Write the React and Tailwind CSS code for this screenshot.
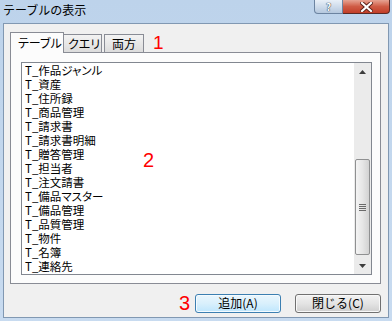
import React from 'react';

const tables = [
  'T_作品ジャンル',
  'T_資産',
  'T_住所録',
  'T_商品管理',
  'T_請求書',
  'T_請求書明細',
  'T_贈答管理',
  'T_担当者',
  'T_注文請書',
  'T_備品マスター',
  'T_備品管理',
  'T_品質管理',
  'T_物件',
  'T_名簿',
  'T_連絡先',
];

const Arrow = ({ down }) => (
  <svg width="7" height="4" viewBox="0 0 7 4">
    <path d={down ? 'M0 0 L7 0 L3.5 4 Z' : 'M0 4 L3.5 0 L7 4 Z'} fill="#3c3c3c" />
  </svg>
);

const ScrollBar = () => (
  <div className="w-[17px] bg-[#ebebeb] flex flex-col">
    <div className="h-[17px] flex items-center justify-center">
      <Arrow />
    </div>
    <div className="h-[79px]" />
    <div className="h-[96px] mx-[1px] rounded-[2px] border border-[#8f9091] bg-gradient-to-r from-[#f4f4f4] via-[#e6e6e6] to-[#d2d2d2] flex flex-col items-center justify-center gap-[1px]">
      <div className="w-[7px] h-[1px] bg-[#6a6a6a]" />
      <div className="w-[7px] h-[1px] bg-[#6a6a6a]" />
      <div className="w-[7px] h-[1px] bg-[#6a6a6a]" />
      <div className="w-[7px] h-[1px] bg-[#6a6a6a]" />
    </div>
    <div className="flex-1" />
    <div className="h-[17px] flex items-center justify-center">
      <Arrow down />
    </div>
  </div>
);

export default function App() {
  return (
    <div className="w-[392px] h-[321px] relative overflow-hidden flex flex-col bg-gradient-to-b from-[#bdd3eb] to-[#c8dbf0] font-['Noto_Sans_CJK_JP','Noto_Sans',sans-serif] text-black">
      {/* title bar */}
      <div className="h-[23px] flex justify-between">
        <div className="pl-[3px] pt-[2px] text-[12px] leading-[16px]">テーブルの表示</div>
        <div className="flex mr-[2px] h-[14px]">
          <div className="w-[29px] h-[14px] rounded-bl-[4px] border border-t-0 border-[#6c84a1] bg-gradient-to-b from-[#e9f0f8] to-[#b5c8de] flex items-center justify-center">
            <span className="text-[10px] leading-[12px] font-bold text-white [text-shadow:0_0_1px_#203040,0_0_1px_#203040]">?</span>
          </div>
          <div className="w-[47px] h-[14px] rounded-br-[4px] border border-t-0 border-l-0 border-[#5a2a25] bg-gradient-to-b from-[#e6a393] via-[#cf5b45] to-[#c23e28] flex items-center justify-center">
            <svg width="13" height="10" viewBox="0 0 13 10">
              <path d="M2 1 L11 9 M11 1 L2 9" stroke="#5a2018" strokeWidth="4" strokeLinecap="square" />
              <path d="M2 1 L11 9 M11 1 L2 9" stroke="#ffffff" strokeWidth="2.2" strokeLinecap="square" />
            </svg>
          </div>
        </div>
      </div>

      {/* client area */}
      <div className="flex-1 ml-[3px] mr-[3px] mb-[3px] border border-[#8198b2] bg-[#f0f0f0] flex flex-col pl-[6px] pr-[7px] pt-[7px]">
        {/* tabs */}
        <div className="flex items-end text-[12px] leading-[14px] [font-feature-settings:'palt']">
          <div className="relative z-10 w-[54px] h-[21px] mb-[-1px] border border-b-0 border-[#898c95] bg-[#fcfcfc] flex items-center pl-[7px] pb-[1px]">
            テーブル
          </div>
          <div className="w-[39px] h-[18px] ml-[-1px] border border-b-0 border-[#898c95] bg-gradient-to-b from-[#f3f3f3] to-[#dcdcdc] flex items-center pl-[4px]">
            クエリ
          </div>
          <div className="w-[40px] h-[18px] ml-[2px] border border-b-0 border-[#898c95] bg-gradient-to-b from-[#f3f3f3] to-[#dcdcdc] flex items-center justify-center">
            両方
          </div>
          <div className="self-start ml-[9px] mt-[2px] text-[19px] leading-[19px] text-[#ff0000] font-['Liberation_Sans',sans-serif]">
            1
          </div>
        </div>

        {/* tab panel */}
        <div className="h-[232px] border border-[#898c95] bg-[#fcfcfc] pt-[9px] pl-[10px] pr-[8px]">
          <div className="h-[213px] border border-[#828790] bg-white flex">
            <div className="flex-1 pl-[3px] text-[11.5px] leading-[14px] [font-feature-settings:'palt']">
              {tables.map((t) => (
                <div key={t} className="h-[14px] whitespace-nowrap">{t}</div>
              ))}
            </div>
            <ScrollBar />
          </div>
        </div>

        {/* buttons */}
        <div className="flex justify-end items-center mt-[9px] text-[12px] leading-[14px]">
          <div className="mr-[5px] text-[20px] leading-[20px] text-[#ff0000] font-['Liberation_Sans',sans-serif]">3</div>
          <button className="w-[86px] h-[19px] rounded-[3px] border border-[#3c7fb1] bg-gradient-to-b from-[#eaf6fd] via-[#d9f0fc] to-[#bee6fd] flex items-center justify-center shadow-[inset_0_0_0_1px_#f4fbff]">
            追加(A)
          </button>
          <button className="ml-[14px] w-[86px] h-[19px] rounded-[3px] border border-[#707070] bg-gradient-to-b from-[#f2f2f2] via-[#e4e4e4] to-[#cfcfcf] flex items-center justify-center shadow-[inset_0_0_0_1px_#f8f8f8]">
            閉じる(C)
          </button>
        </div>
      </div>

      {/* annotation */}
      <div className="absolute left-[143px] top-[150px] text-[20px] leading-[20px] text-[#ff0000] font-['Liberation_Sans',sans-serif]">
        2
      </div>
    </div>
  );
}
